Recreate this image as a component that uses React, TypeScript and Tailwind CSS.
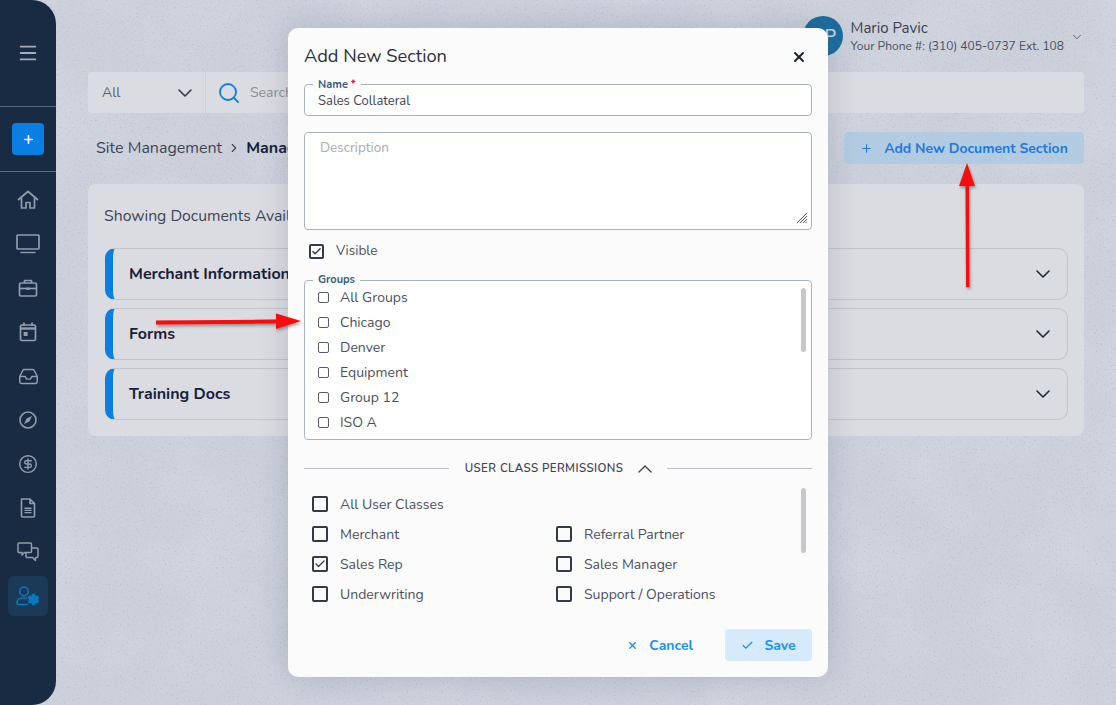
import React from "react";
import { Menu, Plus, Inbox, CircleDollarSign, ChevronDown, ChevronUp, ChevronRight, Search, X, Check, Settings } from "lucide-react";

const font = "font-['Nunito','Noto_Sans','Open_Sans',sans-serif]";

function HomeIcon() {
  return (
    <svg width="22" height="20" viewBox="0 0 22 20" fill="none" stroke="currentColor" strokeWidth="1.7" strokeLinejoin="round" strokeLinecap="round">
      <path d="M1.5 9.5L11 1.5l9.5 8" />
      <path d="M4.5 8v10h4.5v-5.5h4V18h4.5V8" />
    </svg>
  );
}
function MonitorIcon() {
  return (
    <svg width="24" height="20" viewBox="0 0 24 20" fill="none" stroke="currentColor" strokeWidth="1.7">
      <rect x="1" y="1" width="22" height="14" rx="1" />
      <path d="M4.5 18.5h15" strokeWidth="1.4" />
    </svg>
  );
}
function BriefcaseIcon() {
  return (
    <svg width="20" height="20" viewBox="0 0 20 20" fill="none" stroke="currentColor" strokeWidth="1.7" strokeLinejoin="round">
      <rect x="1.5" y="5" width="17" height="13" rx="1.5" />
      <path d="M6.5 5V2.5h7V5" />
      <path d="M1.5 10.5h17" />
      <rect x="8.3" y="9.5" width="3.4" height="2.4" fill="currentColor" stroke="none" />
    </svg>
  );
}
function CompassIcon() {
  return (
    <svg width="20" height="20" viewBox="0 0 20 20" fill="none" stroke="currentColor" strokeWidth="1.6">
      <circle cx="10" cy="10" r="8" />
      <path d="M14 6l-2.6 5.4L6 14l2.6-5.4z" fill="currentColor" stroke="none" />
    </svg>
  );
}
function CalendarIcon() {
  return (
    <svg width="18" height="20" viewBox="0 0 18 20" fill="none" stroke="currentColor" strokeWidth="1.7">
      <rect x="1.5" y="3" width="15" height="15.5" rx="1.5" />
      <path d="M1.5 6.5h15" strokeWidth="2.4" />
      <path d="M5 0.5v3.5M13 0.5v3.5" />
      <rect x="4.6" y="10" width="4" height="4" fill="currentColor" stroke="none" />
    </svg>
  );
}
function DocIcon() {
  return (
    <svg width="16" height="20" viewBox="0 0 16 20" fill="none" stroke="currentColor" strokeWidth="1.6" strokeLinejoin="round">
      <path d="M1.5 1h8.5l4.5 4.5V18a1 1 0 0 1-1 1h-11a1 1 0 0 1-1-1V2a1 1 0 0 1 1-1z" />
      <path d="M10 1v4.5h4.5" />
      <path d="M4.5 10.2h7M4.5 12.4h7M4.5 14.6h7" strokeWidth="1.4" />
    </svg>
  );
}
function ChatIcon() {
  return (
    <svg width="22" height="20" viewBox="0 0 22 20" fill="none" stroke="currentColor" strokeWidth="1.5" strokeLinejoin="round">
      <path d="M2 1h11.5a1 1 0 0 1 1 1v7.5a1 1 0 0 1-1 1H7.5L5 13v-2.500H2a1 1 0 0 1-1-1V2a1 1 0 0 1 1-1z" />
      <path d="M14.500 6H20a1 1 0 0 1 1 1v7.500a1 1 0 0 1-1 1h-1.500V18.500L15.500 15.500H10a1 1 0 0 1-1-1V10.500" />
    </svg>
  );
}
function UserGearIcon() {
  return (
    <div className="relative h-[20px] w-[24px] text-[#0b79bd]">
      <svg width="18" height="20" viewBox="0 0 18 20" fill="none" stroke="currentColor" strokeWidth="1.6">
        <circle cx="8" cy="5.500" r="4.300" />
        <path d="M11.500 18.500H2.500a1.500 1.500 0 0 1-1.500-1.500c0-3 2.400-5 5-5h5" strokeLinecap="round" />
      </svg>
      <Settings size={13} strokeWidth={2.4} fill="currentColor" className="absolute right-0 top-[7px]" />
    </div>
  );
}

function Section({ title }: { title: string }) {
  return (
    <div className="ml-[1px] flex h-[52px] items-center justify-between rounded-[10px] border border-[#c3c5cb] border-l-[8px] border-l-[#0a7fe3] pl-[16px] pr-[12px]">
      <span className="text-[16px] font-bold text-[#16213a]">{title}</span>
      <ChevronDown size={24} strokeWidth={1.6} className="text-[#1b2a3d]" />
    </div>
  );
}

function SmallBox({ label }: { label: string }) {
  return (
    <div className="flex h-[25px] items-center gap-[11px] pl-[13px]">
      <span className="h-[11px] w-[11px] rounded-[2px] border-[1.5px] border-[#555b6a]" />
      <span className="text-[14px] text-[#4a5060]">{label}</span>
    </div>
  );
}

function BigBox({ label, checked }: { label: string; checked?: boolean }) {
  return (
    <div className="flex h-[30px] items-center gap-[12px] pl-2">
      <span className="flex h-[16px] w-[16px] items-center justify-center rounded-[2px] border-2 border-[#343a4d]">
        {checked && <Check size={12} strokeWidth={2.5} className="text-[#343a4d]" />}
      </span>
      <span className="text-[14px] text-[#4a5060]">{label}</span>
    </div>
  );
}

export default function App() {
  const navIcons = [
    <HomeIcon key="h" />,
    <MonitorIcon key="m" />,
    <BriefcaseIcon key="b" />,
    <CalendarIcon key="c" />,
    <Inbox size={21} strokeWidth={1.7} key="i" />,
    <CompassIcon key="co" />,
    <CircleDollarSign size={20} strokeWidth={1.7} key="d" />,
    <DocIcon key="do" />,
    <ChatIcon key="ch" />,
  ];
  return (
    <div className={`${font} relative flex h-[705px] w-[1116px] overflow-hidden bg-[#cbd0db]`}>
      <svg className="pointer-events-none absolute left-0 top-0" width="1116" height="705">
        <filter id="clouds">
          <feTurbulence type="fractalNoise" baseFrequency="0.012" numOctaves="4" seed="3" />
          <feColorMatrix values="0 0 0 0 1  0 0 0 0 1  0 0 0 0 1  1.2 0 0 0 -0.45" />
        </filter>
        <filter id="specks">
          <feTurbulence type="fractalNoise" baseFrequency="0.55" numOctaves="2" seed="8" />
          <feColorMatrix values="0 0 0 0 0.4  0 0 0 0 0.43  0 0 0 0 0.5  0 3.5 0 0 -2.05" />
        </filter>
        <rect width="1116" height="705" filter="url(#clouds)" opacity="0.2" />
        <rect width="1116" height="705" filter="url(#specks)" opacity="0.5" />
      </svg>

      <aside className="relative flex w-[56px] shrink-0 flex-col items-center rounded-r-[24px] bg-[#192b42]">
        <div className="flex h-[107px] w-full items-center justify-center border-b border-[#59677a] text-[#a5adb8]">
          <Menu size={22} strokeWidth={2} />
        </div>
        <div className="flex h-[65px] w-full items-center justify-center border-b border-[#59677a]">
          <div className="flex h-8 w-8 items-center justify-center rounded bg-[#0a7fe3] text-white">
            <Plus size={13} strokeWidth={3} />
          </div>
        </div>
        <div className="flex w-full flex-col items-center pt-[6px]">
          {navIcons.map((icon) => (
            <div key={icon.key} className="flex h-[44px] w-full items-center justify-center text-[#939dab]">
              {icon}
            </div>
          ))}
          <div className="mt-[2px] flex h-[40px] w-[40px] items-center justify-center rounded-md bg-[#1b3a57]">
            <UserGearIcon />
          </div>
        </div>
      </aside>

      <main className="relative flex min-w-0 flex-1 flex-col pl-[32px] pr-[32px]">
        <header className="flex h-[72px] items-start justify-end pt-[16px]">
          <div className="relative mr-[20px] flex items-start gap-[8px]">
            <div className="flex h-10 w-10 items-center justify-center rounded-full bg-[#1d6d9e] text-[18px] font-semibold text-[#c4d4df]">MP</div>
            <div className="flex flex-col leading-none">
              <span className="mt-[3px] text-[15px] leading-[18px] text-[#3b4150]">Mario Pavic</span>
              <span className="text-[12px] leading-[18px] text-[#4b5160]">Your Phone #: (310) 405-0737 Ext. 108</span>
            </div>
            <ChevronDown size={14} strokeWidth={1.5} className="absolute -right-[20px] top-[14px] text-[#4b5160]" />
          </div>
        </header>

        <div className="flex h-[41px] items-center rounded bg-[#dbdce1]">
          <div className="flex h-full w-[118px] items-center justify-between border-r border-[#cdd0d6] pl-[14px] pr-[8px]">
            <span className="text-[14px] text-[#5a5f6d]">All</span>
            <ChevronDown size={24} strokeWidth={1.6} className="text-[#333b4b]" />
          </div>
          <Search size={24} strokeWidth={1.8} className="ml-[11px] text-[#0a7fe3]" />
          <span className="ml-[9px] text-[14px] text-[#8a8e98]">Search</span>
        </div>

        <div className="mt-[19px] flex h-[32px] items-center justify-between">
          <div className="flex items-center whitespace-nowrap pl-[8px] text-[16px] text-[#3f4555]">
            <span>Site Management</span>
            <ChevronRight size={14} className="mx-[5px]" />
            <span className="font-bold text-[#16213a]">Manage</span>
          </div>
          <div className="flex h-[32px] w-[240px] items-center justify-center gap-[11px] rounded bg-[#b3cbe1] text-[14px] font-bold text-[#1b79e0]">
            <Plus size={13} strokeWidth={2} />
            <span>Add New Document Section</span>
          </div>
        </div>

        <section className="mt-[20px] h-[252px] rounded-[8px] bg-[#dbdce1] px-[16px] pt-[22px]">
          <p className="text-[15.75px] leading-5 text-[#3f4555]">Showing Documents Available</p>
          <div className="mt-[22px] flex flex-col gap-[8px]">
            <Section title="Merchant Information" />
            <Section title="Forms" />
            <Section title="Training Docs" />
          </div>
        </section>
      </main>

      <div className="absolute inset-0 flex items-start justify-center pt-[28px]">
        <div className="flex h-[649px] w-[540px] flex-col rounded-[10px] bg-[#fbfbfb] px-[16px] shadow-[0_0_30px_rgba(50,60,90,0.2)]">
          <div className="flex h-[56px] items-center justify-between pt-[2px]">
            <h2 className="text-[18.25px] text-[#2a3040]">Add New Section</h2>
            <X size={16} strokeWidth={3} className="mr-[5px] text-[#1b2433]" />
          </div>

          <div className="relative flex h-[32px] items-center rounded border border-[#a7b4c0] bg-white px-[13px] text-[13px] text-[#3f4555]">
            <span className="absolute -top-[6px] left-[8px] bg-[#fbfbfb] px-[5px] text-[11px] font-bold leading-[12px] text-[#3a5f7d]">
              Name <span className="text-[#e02020]">*</span>
            </span>
            <span className="pt-[4px]">Sales Collateral</span>
          </div>

          <div className="relative mt-[16px] h-[98px] rounded border border-[#a7b4c0] bg-white px-[15px] pt-[5px] text-[13.5px] text-[#a9abb0]">
            Description
            <svg className="absolute bottom-[6px] right-[4px]" width="11" height="11" viewBox="0 0 11 11" stroke="#555" strokeWidth="1">
              <path d="M1 11L11 1M4 11l7-7M7 11l4-4M9.5 11l1.5-1.5" />
            </svg>
          </div>

          <div className="mt-[9px] flex h-[24px] items-center gap-[12px] pl-[5px]">
            <span className="flex h-[15px] w-[15px] items-center justify-center rounded-[2px] border-2 border-[#343a4d]">
              <Check size={11} strokeWidth={3} className="text-[#343a4d]" />
            </span>
            <span className="text-[13.5px] text-[#4a5060]">Visible</span>
          </div>

          <div className="relative mt-[17px] h-[160px] rounded border border-[#a7b4c0] bg-white pt-[4px]">
            <span className="absolute -top-[7px] left-[8px] bg-[#fbfbfb] px-[5px] text-[11px] font-bold leading-[12px] text-[#3a5f7d]">Groups</span>
            {["All Groups", "Chicago", "Denver", "Equipment", "Group 12", "ISO A"].map((g) => (
              <SmallBox key={g} label={g} />
            ))}
            <div className="absolute right-[5px] top-[7px] h-[64px] w-[5px] rounded bg-[#c6c8cd]" />
          </div>

          <div className="mt-[20px] flex h-[17px] items-center gap-[16px]">
            <div className="h-px flex-1 bg-[#bcc0c6]" />
            <span className="text-[11.5px] font-semibold tracking-[0.4px] text-[#3f4555]">USER CLASS PERMISSIONS</span>
            <ChevronUp size={24} strokeWidth={1.4} className="-mx-[6px] text-[#3f4555]" />
            <div className="h-px flex-1 bg-[#bcc0c6]" />
          </div>

          <div className="relative mt-[12px] grid grid-cols-[244px_1fr]">
            <BigBox label="All User Classes" />
            <div className="h-[30px]" />
            <BigBox label="Merchant" />
            <BigBox label="Referral Partner" />
            <BigBox label="Sales Rep" checked />
            <BigBox label="Sales Manager" />
            <BigBox label="Underwriting" />
            <BigBox label="Support / Operations" />
            <div className="absolute right-[6px] top-[-1px] h-[65px] w-[5px] rounded bg-[#c6c8cd]" />
          </div>

          <div className="mt-[20px] flex h-[32px] items-center justify-end gap-[32px]">
            <div className="flex items-center gap-[11px] text-[14px] font-bold text-[#1891f5]">
              <X size={11} strokeWidth={3} />
              <span>Cancel</span>
            </div>
            <div className="flex h-[32px] w-[87px] items-center justify-center gap-[10px] rounded bg-[#d5eafd] text-[14px] font-bold text-[#1891f5]">
              <Check size={13} strokeWidth={2.2} />
              <span>Save</span>
            </div>
          </div>
        </div>
      </div>

      <svg className="pointer-events-none absolute left-0 top-0" width="1116" height="705">
        <defs>
          <filter id="sh" x="-20%" y="-20%" width="140%" height="140%">
            <feDropShadow dx="1" dy="2" stdDeviation="1.5" floodColor="#000" floodOpacity="0.35" />
          </filter>
        </defs>
        <g filter="url(#sh)" fill="#f60b0b">
          <polygon points="156,320.500 276,319.500 276,313.500 301,321 276,329 276,323.500 156,324.500" />
          <polygon points="966,287 965.500,186 959,186 967,163 975,186 969,186 969.500,287" />
        </g>
      </svg>
    </div>
  );
}
